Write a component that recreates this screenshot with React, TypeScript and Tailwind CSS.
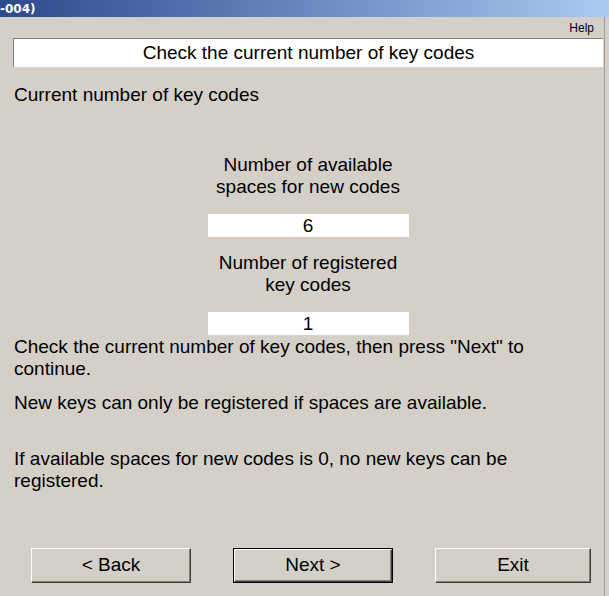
import React from "react";

const font = { fontFamily: '"Liberation Sans", Arial, sans-serif' };

function ClassicButton({ label, width, isDefault = false }: { label: string; width: string; isDefault?: boolean }) {
  return (
    <div className={(isDefault ? "border border-black " : "") + width}>
      <button
        className={
          "w-full flex items-center justify-center bg-[#d4d0c8] text-[19px] text-black border-t border-l border-white border-r border-b border-r-[#404040] border-b-[#404040] shadow-[inset_-1px_-1px_0_#808080] " +
          (isDefault ? "h-[33px]" : "h-[35px]")
        }
      >
        {label}
      </button>
    </div>
  );
}

function ValueBox({ value }: { value: string }) {
  return (
    <div className="mx-auto w-[201px] h-[23px] bg-white flex items-center justify-center text-[19px] leading-none">
      {value}
    </div>
  );
}

export default function App() {
  return (
    <div className="w-[609px] h-[596px] bg-[#d4d0c8] flex flex-col overflow-hidden text-black" style={font}>
      {/* caption bar */}
      <div className="h-[17px] shrink-0 bg-gradient-to-r from-[#2c4a8c] to-[#aacbf2] flex items-center">
        <span className="text-white font-bold text-[12px] leading-none" style={{ fontFamily: '"DejaVu Sans", Tahoma, sans-serif' }}>
          -004)
        </span>
      </div>

      <div className="flex-1 flex flex-col w-[605px] border-r border-[#a09d96]">
        <div className="h-[21px] flex items-center justify-end pr-[10px]">
          <span className="text-[12px] leading-none">Help</span>
        </div>

        <div className="ml-[13px] w-[590px] h-[29px] bg-white border-t border-l border-[#808080] flex items-center justify-center text-[19px]">
          Check the current number of key codes
        </div>

        <div className="pl-[14px] pr-[10px] text-[19px] leading-[22px]">
          <p className="mt-[17px]">Current number of key codes</p>

          <div className="w-[590px] -ml-px">
            <p className="mt-[48px] text-center">
              Number of available
              <br />
              spaces for new codes
            </p>
            <div className="mt-[16px]">
              <ValueBox value="6" />
            </div>
            <p className="mt-[15px] text-center">
              Number of registered
              <br />
              key codes
            </p>
            <div className="mt-[16px]">
              <ValueBox value="1" />
            </div>
          </div>

          <p className="mt-[1px]">
            Check the current number of key codes, then press "Next" to
            <br />
            continue.
          </p>
          <p className="mt-[12px]">New keys can only be registered if spaces are available.</p>
          <p className="mt-[34px]">
            If available spaces for new codes is 0, no new keys can be
            <br />
            registered.
          </p>
        </div>

        <div className="mt-[56px] ml-[31px] w-[560px] flex justify-between">
          <ClassicButton label="< Back" width="w-[160px]" />
          <ClassicButton label="Next >" width="w-[160px]" isDefault />
          <ClassicButton label="Exit" width="w-[156px]" />
        </div>
      </div>
    </div>
  );
}
